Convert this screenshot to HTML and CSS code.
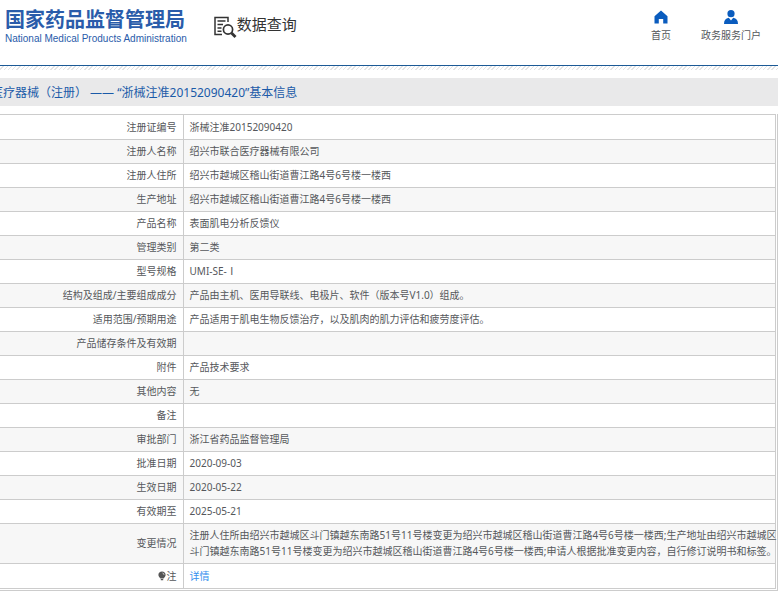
FILE: index.html
```html
<!DOCTYPE html>
<html lang="zh-CN">

<head>
  <title>数据查询</title>
  <meta charset="utf-8">
  <meta name="viewport" content="width=device-width, initial-scale=1">
  <link rel="stylesheet" href="styles.css">
</head>
<body>
  <header class="header">
    <a class="logo" href="#">
      <span class="logo-cn">国家药品监督管理局</span>
      <span class="logo-en">National Medical Products Administration</span>
    </a>
    <a class="search-title" href="#">
      <svg width="23" height="23" viewBox="0 0 23 23" fill="none" stroke="#333" stroke-width="1.5">
        <path d="M8 18.5H1V1.5H14V6"/>
        <path d="M3.5 5H11.5M3.5 8.5H9M3.5 12H7.5M3.5 15.2H7.5"/>
        <circle cx="14" cy="13.5" r="4.6" stroke-width="1.7"/>
        <path d="M17.5 17L21.5 21" stroke-width="2.8"/>
      </svg>
      <span>数据查询</span>
    </a>
    <nav class="nav">
      <a href="#">
        <svg width="14" height="14" viewBox="0 0 14 14" fill="#0a5cbe">
          <path d="M7 0.5L13.5 6.2V13.5H9.2V9H4.8V13.5H0.5V6.2Z"/>
        </svg>
        <span>首页</span>
      </a>
      <a href="#">
        <svg width="14" height="14" viewBox="0 0 14 14" fill="#0a5cbe">
          <circle cx="7" cy="3.7" r="3.6"/>
          <path d="M0 14C0 10.5 1.5 8.3 4.8 7.8L7 10.5L9.2 7.8C12.5 8.3 14 10.5 14 14Z"/>
        </svg>
        <span>政务服务门户</span>
      </a>
    </nav>
  </header>
  <div class="hatch"></div>

  <h1 class="title">医疗器械（注册） —— “浙械注准20152090420”基本信息</h1>

  <div class="detail">
    <table>
      <tr><th scope="row">注册证编号</th><td>浙械注准20152090420</td></tr>
      <tr><th scope="row">注册人名称</th><td>绍兴市联合医疗器械有限公司</td></tr>
      <tr><th scope="row">注册人住所</th><td>绍兴市越城区稽山街道曹江路4号6号楼一楼西</td></tr>
      <tr><th scope="row">生产地址</th><td>绍兴市越城区稽山街道曹江路4号6号楼一楼西</td></tr>
      <tr><th scope="row">产品名称</th><td>表面肌电分析反馈仪</td></tr>
      <tr><th scope="row">管理类别</th><td>第二类</td></tr>
      <tr><th scope="row">型号规格</th><td>UMI-SE-Ⅰ</td></tr>
      <tr><th scope="row">结构及组成/主要组成成分</th><td>产品由主机、医用导联线、电极片、软件（版本号V1.0）组成。</td></tr>
      <tr><th scope="row">适用范围/预期用途</th><td>产品适用于肌电生物反馈治疗，以及肌肉的肌力评估和疲劳度评估。</td></tr>
      <tr><th scope="row">产品储存条件及有效期</th><td></td></tr>
      <tr><th scope="row">附件</th><td>产品技术要求</td></tr>
      <tr><th scope="row">其他内容</th><td>无</td></tr>
      <tr><th scope="row">备注</th><td></td></tr>
      <tr><th scope="row">审批部门</th><td>浙江省药品监督管理局</td></tr>
      <tr><th scope="row">批准日期</th><td>2020-09-03</td></tr>
      <tr><th scope="row">生效日期</th><td>2020-05-22</td></tr>
      <tr><th scope="row">有效期至</th><td>2025-05-21</td></tr>
      <tr><th scope="row">变更情况</th><td class="changes">注册人住所由绍兴市越城区斗门镇越东南路51号11号楼变更为绍兴市越城区稽山街道曹江路4号6号楼一楼西;生产地址由绍兴市越城区<br>斗门镇越东南路51号11号楼变更为绍兴市越城区稽山街道曹江路4号6号楼一楼西;申请人根据批准变更内容，自行修订说明书和标签。</td></tr>
      <tr>
        <th scope="row"><svg class="bulb" width="8" height="10" viewBox="0 0 8 10" fill="#555"><path d="M4 0.5C6.2 0.5 7.6 2 7.6 3.9C7.6 5.6 6.2 6.3 5.6 7.6H2.4C1.8 6.3 0.4 5.6 0.4 3.9C0.4 2 1.8 0.5 4 0.5ZM2.8 8.1H5.2V9.2H2.8Z"/><path d="M4.5 2Q6 2.3 6 3.8" fill="none" stroke="#fff" stroke-width="0.7"/></svg>注</th>
        <td><a class="more" href="#">详情</a></td>
      </tr>
    </table>
  </div>
</body>

</html>
```

FILE: styles.css
```css
* {
  box-sizing: border-box;
}
body {
  margin: 0;
  background: #fff;
  color: #55575b;
  font-family: "Noto Sans", "Noto Sans CJK SC", sans-serif;
  font-size: 10px;
  line-height: 16px;
  overflow-x: hidden;
}
a {
  color: inherit;
  text-decoration: none;
}
.header {
  display: flex;
  align-items: flex-start;
  height: 66px;
  padding: 8px 17px 0 5px;
  border-bottom: 1px solid #1c5a96;
}
.logo {
  display: flex;
  flex-direction: column;
  color: #2a5caa;
  white-space: nowrap;
}
.logo-cn {
  font-size: 20px;
  line-height: 24px;
  font-weight: bold;
}
.logo-en {
  font-family: "Liberation Sans", sans-serif;
  font-size: 10px;
  line-height: 14px;
}
.search-title {
  display: flex;
  align-items: flex-start;
  margin-left: 27px;
  padding-top: 4px;
  color: #333;
  font-size: 15px;
  line-height: 24px;
}
.search-title svg {
  margin-top: 4px;
}
.nav {
  display: flex;
  gap: 30px;
  margin-left: auto;
  padding-top: 2px;
}
.nav a {
  display: flex;
  flex-direction: column;
  align-items: center;
  gap: 3px;
}
.hatch {
  height: 4px;
  background: repeating-linear-gradient(135deg, #fff 0, #fff 2px, #e4e4e4 2px, #e4e4e4 3px);
}
.title {
  margin: 8px 0;
  padding: 6px 0 4px;
  background: #e9e9ea;
  color: #1a5aa8;
  font-size: 12px;
  line-height: 18px;
  font-weight: normal;
  text-indent: -9px;
  white-space: nowrap;
}
.detail {
  padding: 0 1px 1px 0;
  border: 1px solid #ccc;
  border-width: 0 1px 1px 0;
}
table {
  width: 100%;
  border-collapse: collapse;
  table-layout: fixed;
}
th,
td {
  height: 24px;
  border: 1px solid #ccc;
}
th {
  width: 183px;
  padding: 3px 6px 4px 0;
  border-left: 0;
  font-weight: normal;
  text-align: right;
}
td {
  padding: 3px 0 4px 6px;
}
tr:nth-child(even) {
  background: #f7f7f7;
}
tr:first-child td,
tr:last-child td {
  height: 25px;
}
.changes {
  white-space: nowrap;
}
.bulb {
  margin-right: 1px;
  vertical-align: -1px;
}
.more {
  color: #3490ee;
}
```
